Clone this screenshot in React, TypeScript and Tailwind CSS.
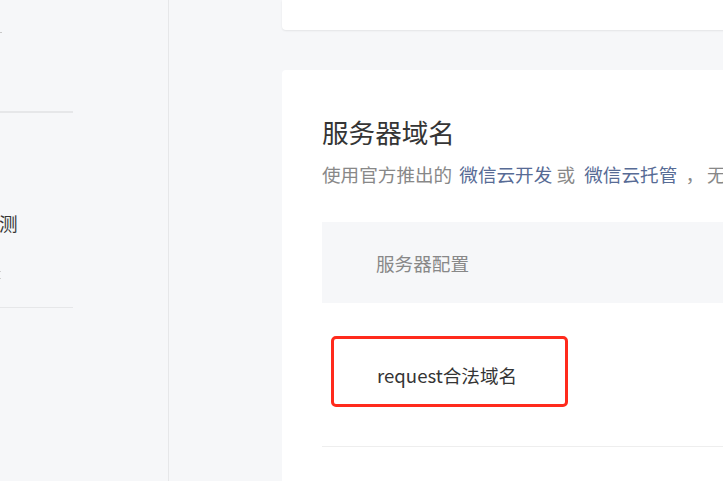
import { FC } from "react";

const font = { fontFamily: '"Noto Sans CJK SC", "Noto Sans", sans-serif' };

const Sidebar: FC = () => {
    return <div className="w-[169px] shrink-0 h-full border-r border-[#e6e7e9] relative">
        {/* clipped menu chevrons and dividers */}
        <div className="absolute left-0 top-[32px] w-[2px] h-[1px] bg-[#c9c9c9]"></div>
        <div className="h-[111px]"></div>
        <div className="w-[73px] h-[2px] bg-[#e6e7e9]"></div>
        <div className="h-[97px]"></div>
        <p className="text-[18.6px] leading-[26px] text-[#353535] -ml-[1px]">测</p>
        <div className="absolute left-0 top-[271px] w-[1px] h-[8px] flex flex-col justify-between">
            <div className="h-[1px] bg-[#d0d0d0]"></div>
            <div className="h-[1px] bg-[#d0d0d0]"></div>
        </div>
        <div className="h-[71px]"></div>
        <div className="w-[73px] h-[1px] bg-[#e6e7e9]"></div>
    </div>
}

const Card: FC = () => {
    return <div className="bg-white rounded-[4px] w-[480px] shrink-0 pt-[44px] pl-[40px] pb-[80px]">
        <h2 className="text-[26.6px] leading-[36px] text-[#353535] font-normal">服务器域名</h2>
        <p className="mt-[11px] text-[18.6px] leading-[26px] text-[#888888] whitespace-nowrap">
            使用官方推出的 <span className="ml-[3px] text-[#576b95]">微信云开发</span> 或 <span className="ml-[5px] text-[#576b95]">微信云托管</span><span className="ml-[4px]"> ，</span><span className="ml-[3px]">无需</span>
        </p>
        {/* table */}
        <div className="mt-[35px]">
            <div className="h-[81px] bg-[#f6f7f9] flex items-center pl-[54px]">
                <span className="text-[18.6px] text-[#888888]">服务器配置</span>
            </div>
            <div className="h-[144px] flex items-center pl-[55px] relative border-b border-[#eeeeee]">
                <span className="text-[18.6px] text-[#353535]">request合法域名</span>
                {/* highlight annotation */}
                <div className="absolute left-[9px] top-[33px] w-[237px] h-[71px] border-[3px] border-[#ff2a1c] rounded-[5px]"></div>
            </div>
        </div>
    </div>
}

export default function App() {
    return <div className="w-[723px] h-[481px] overflow-hidden bg-[#f6f7f9] flex" style={font}>
        <Sidebar />
        <div className="pl-[113px] flex flex-col gap-[40px]">
            <div className="bg-white rounded-b-[4px] h-[30px] w-[480px] shrink-0 shadow-[0_1px_2px_rgba(0,0,0,0.08)]"></div>
            <Card />
        </div>
    </div>
}
